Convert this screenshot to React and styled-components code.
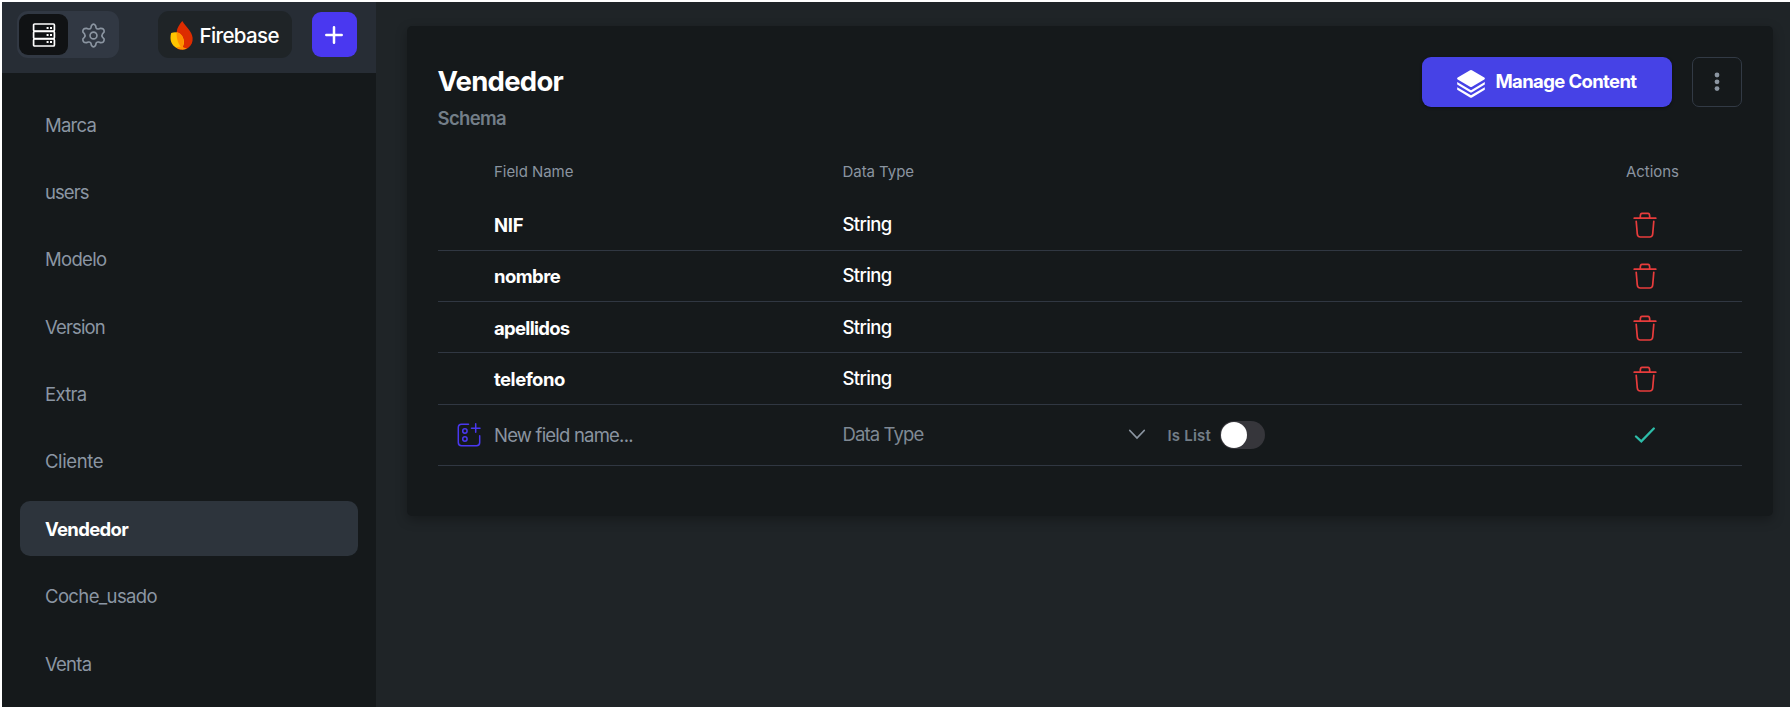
import React from "react";
import styled, { createGlobalStyle, css } from "styled-components";

const GlobalStyle = createGlobalStyle`
  *, *::before, *::after { box-sizing: border-box; }
  body {
    margin: 0;
    background: #fff;
    font-family: Inter, "Liberation Sans", sans-serif;
    font-feature-settings: "liga" 0;
  }
  svg { display: block; flex: none; }
  button { font: inherit; border: 0; padding: 0; background: none; cursor: pointer; }
`;

const Frame = styled.div`
  height: 709px;
  padding: 2px;
  display: flex;
  overflow: hidden;
`;

const Sidebar = styled.aside`
  width: 374px;
  flex: none;
  background: #15191b;
  overflow: hidden;
`;

const SidebarHeader = styled.header`
  height: 71px;
  padding: 9px 19.5px 0 14.5px;
  display: flex;
  align-items: flex-start;
  background: #272d35;
`;

const ViewSwitch = styled.div`
  width: 102.5px;
  height: 47px;
  padding: 3px 2.4px;
  display: flex;
  border-radius: 11px;
  background: #313843;
`;

const ViewTab = styled.button`
  width: ${({ $active }) => ($active ? 50 : 46)}px;
  margin-left: ${({ $active }) => ($active ? 0 : 3)}px;
  padding-top: 1px;
  height: 41px;
  display: flex;
  align-items: center;
  justify-content: center;
  border-radius: 9px;
  color: ${({ $active }) => ($active ? "#fff" : "#8b95a1")};
  background: ${({ $active }) => ($active ? "#101214" : "transparent")};
`;

const Provider = styled.button`
  width: 134px;
  height: 47px;
  margin-left: 38.5px;
  padding: 1px 0 0 12px;
  display: flex;
  align-items: center;
  gap: 6px;
  border-radius: 11px;
  background: #1f2427;
  color: #fff;
  font-size: 20.5px;
  font-weight: 500;
  letter-spacing: -0.62px;
`;

const AddButton = styled.button`
  width: 45px;
  height: 45px;
  margin: 1px 0 0 auto;
  display: flex;
  align-items: center;
  justify-content: center;
  border-radius: 9px;
  background: #4a38f0;
`;

const ModelList = styled.nav`
  padding: 24px 18px 0;
  display: flex;
  flex-direction: column;
  gap: 12.4px;
`;

const ModelItem = styled.a`
  height: 55px;
  flex: none;
  padding: 0 25px;
  display: flex;
  align-items: center;
  border-radius: 10px;
  font-size: 18.5px;
  letter-spacing: ${({ $tracking }) => $tracking}px;
  color: #8b96a3;
  ${({ $active }) =>
    $active &&
    css`
      background: #2d343c;
      color: #fff;
      font-weight: 700;
    `}
`;

const Main = styled.main`
  flex: 1;
  min-width: 0;
  padding: 24px 17px 0 30.5px;
  background: #1f2427;
`;

const Card = styled.section`
  height: 489.5px;
  padding: 31px 31px 0;
  border-radius: 5px;
  background: #15191b;
  box-shadow: 0 4px 12px rgba(0, 0, 0, 0.28);
`;

const CardHeader = styled.header`
  height: 97.5px;
  display: flex;
  align-items: flex-start;
`;

const Heading = styled.div`
  flex: 1;
  padding-top: 6px;
`;

const Title = styled.h1`
  margin: 0;
  font-size: 27.5px;
  line-height: 36px;
  font-weight: 700;
  letter-spacing: -0.75px;
  color: #fff;
`;

const Subtitle = styled.h2`
  margin: 7px 0 0;
  font-size: 18.5px;
  line-height: 24px;
  font-weight: 600;
  letter-spacing: -0.65px;
  color: #737e88;
`;

const ManageButton = styled.button`
  width: 250px;
  height: 50px;
  padding-left: 34.5px;
  display: flex;
  align-items: center;
  gap: 11px;
  border-radius: 9px;
  background: #4642e6;
  box-shadow: 0 1px 3px rgba(0, 0, 0, 0.4);
  color: #fff;
  font-size: 18.5px;
  font-weight: 700;
  letter-spacing: -0.63px;

  svg { margin-top: 4px; }
  span { margin-top: -2px; }
`;

const MenuButton = styled.button`
  width: 50px;
  height: 50px;
  margin-left: 20px;
  display: flex;
  align-items: center;
  justify-content: center;
  border: 1px solid #323a45;
  border-radius: 7px;
`;

const GridRow = styled.div`
  display: grid;
  grid-template-columns: 56.5px 348.5px 1fr 117px;
  align-items: center;
`;

const HeadRow = styled(GridRow)`
  height: 45px;
  padding-bottom: 11px;
  font-size: 15px;
  letter-spacing: -0.05px;
  color: #8a94a0;
`;

const ActionsLabel = styled.span`
  padding-left: 1px;
`;

const FieldRow = styled(GridRow)`
  height: ${({ $tall }) => ($tall ? 61.3 : 51.25)}px;
  border-bottom: 1px solid #303742;
`;

const FieldName = styled.span`
  font-size: 18.5px;
  font-weight: 700;
  letter-spacing: ${({ $tracking }) => $tracking}px;
  color: #fff;
  padding-top: 1px;
`;

const FieldType = styled.span`
  font-size: 18.5px;
  font-weight: 500;
  letter-spacing: -0.65px;
  color: #fff;
  margin-top: -1px;
`;

const NameInput = styled.span`
  font-size: 18.5px;
  letter-spacing: -0.79px;
  color: #8a94a0;
  padding-top: 1px;
`;

const IconCell = styled.div`
  display: flex;
  padding-top: 1px;
  padding-left: ${({ $inset }) => $inset}px;
`;

const TypeCell = styled.div`
  display: flex;
  align-items: center;
`;

const TypeSelect = styled.div`
  width: 303px;
  margin-top: -1px;
  display: flex;
  align-items: center;
  justify-content: space-between;
  font-size: 18.5px;
  letter-spacing: -0.87px;
  color: #7f8994;
`;

const ListLabel = styled.span`
  margin: 2px 8.5px 0 22px;
  font-size: 15px;
  font-weight: 600;
  letter-spacing: 0.2px;
  color: #737e88;
`;

const Toggle = styled.div`
  width: 45.5px;
  height: 28px;
  padding: 1px;
  border-radius: 14px;
  background: #36363b;

  &::before {
    content: "";
    display: block;
    width: 26px;
    height: 26px;
    border-radius: 50%;
    background: #fff;
  }
`;

const ServerIcon = () => (
  <svg width="24" height="24" viewBox="0 0 24 24" fill="none" stroke="currentColor" strokeWidth="1.7">
    <rect x="1.6" y="1" width="20.8" height="7" rx="1" />
    <rect x="1.6" y="8.5" width="20.8" height="7" rx="1" />
    <rect x="1.6" y="16" width="20.8" height="7" rx="1" />
    <path d="M14.6 5h2M18 5h2M14.6 12h2M18 12h2M14.6 19h2M18 19h2" strokeWidth="2" />
  </svg>
);

const GearIcon = () => (
  <svg width="25" height="25" viewBox="0 0 24 24" fill="none" stroke="currentColor" strokeWidth="1.6" strokeLinejoin="round">
    <circle cx="12" cy="12" r="3.3" />
    <path d="M10 2.7Q12 -.5 14 2.7L14.5 4.6Q15.2 6.1 16.8 5.7L18.7 5.2Q22.5 5 22.2 8.6L20.7 10.3Q19.5 12 20.7 13.7L22.2 15.4Q22.5 19 18.7 18.8L16.8 18.3Q15.2 17.900 14.5 19.4L14 21.3Q12 24.5 10 21.3L9.5 19.4Q8.8 17.9 7.2 18.3L5.3 18.8Q1.5 19 1.8 15.4L3.3 13.7Q4.5 12 3.3 10.3L1.8 8.6Q1.5 5 5.3 5.2L7.2 5.7Q8.8 6.1 9.5 4.6Z" />
  </svg>
);

const FlameIcon = () => (
  <svg width="24" height="29" viewBox="0 0 24 29">
    <path d="M12.3 0C9.5 3.5 7 6.5 6.6 11.5L7.8 28C10 28.9 15 29 18.3 26.7C21.5 24.5 23 21 22.6 16.8C22 10.5 16 6 12.3 0Z" fill="#dd2c00" />
    <path d="M1.2 12C5 10.3 10 11 12.4 15.5C14.8 20 14.5 24.5 11 28.3C4.5 27.5 .5 22.5 .5 17C.5 15 .7 13.4 1.2 12Z" fill="#ffc400" />
    <path d="M6.6 11.3C9.500 11.7 11.5 13.5 12.7 16C14.2 19.5 14 23.5 12 27C8.5 24 6.3 18 6.6 11.3Z" fill="#ff9100" />
    <path d="M5.5 26.3Q8.500 28.6 12.5 28.7Q15.5 28.6 17 27.6Q14 27 12 25.5Z" fill="#ff9100" />
  </svg>
);

const PlusIcon = () => (
  <svg width="18" height="18" viewBox="0 0 18 18" stroke="#fff" strokeWidth="2.5" strokeLinecap="round">
    <path d="M9 1.3v15.4M1.3 9h15.4" />
  </svg>
);

const LayersIcon = () => (
  <svg width="28" height="28" viewBox="0 0 28 28" fill="#fff">
    <path d="M13.1 .3Q14 -.2 14.9 .3L27.3 7.5Q28.5 8.5 27.3 9.4L15 16.7Q14 17.3 13 16.7L.7 9.4Q-.5 8.5 .7 7.5Z" />
    <path d="M.2 12L14 20.2L27.8 12V14.5L15 22.2Q14 22.8 13 22.2L.2 14.5Z" />
    <path d="M.2 17.2L14 25.3L27.8 17.2V19.7L15 27.4Q14 28 13 27.4L.2 19.7Z" />
  </svg>
);

const DotsIcon = () => (
  <svg width="6" height="20" viewBox="0 0 6 20" fill="#8b95a1">
    <circle cx="3" cy="3" r="2.4" />
    <circle cx="3" cy="9.8" r="2.4" />
    <circle cx="3" cy="16.6" r="2.4" />
  </svg>
);

const TrashIcon = () => (
  <svg width="24" height="26" viewBox="0 0 24 26" fill="none" stroke="#e83c3c" strokeWidth="1.7" strokeLinecap="round" strokeLinejoin="round">
    <path d="M1.2 6.200H22.8M7.3 6V4.5Q7.3 1.4 9 1.4H15Q16.7 1.4 16.7 4.5V6" />
    <path d="M3.2 9.3L4.3 22Q4.6 25 7.3 25H16.7Q19.4 25 19.7 22L20.8 9.3" />
  </svg>
);

const NewFieldIcon = () => (
  <svg width="24" height="24" viewBox="0 0 24 24" fill="none" stroke="#4a38f0" strokeWidth="1.5" strokeLinecap="round">
    <path d="M11.5 1.3H4.5Q1.3 1.3 1.3 4.5V19.5Q1.3 22.7 4.5 22.7H19.5Q22.7 22.7 22.7 19.5V12.7" />
    <path d="M18.7 .8V9.3M14.5 5.2H23" />
    <circle cx="7.9" cy="8" r="2.2" />
    <circle cx="7.9" cy="16" r="2.2" />
  </svg>
);

const ChevronIcon = () => (
  <svg width="18" height="11" viewBox="0 0 18 11" fill="none" stroke="#8b95a1" strokeWidth="1.8" strokeLinecap="round">
    <path d="M1.8 1.5L9 9L16.2 1.5" />
  </svg>
);

const CheckIcon = () => (
  <svg width="22" height="17" viewBox="0 0 22 17" fill="none" stroke="#2dbda9" strokeWidth="2.3" strokeLinecap="round">
    <path d="M2 9.5L7.3 14.3L19.8 1.5" />
  </svg>
);

const models = [
  { name: "Marca", tracking: -0.75 },
  { name: "users", tracking: -0.95 },
  { name: "Modelo", tracking: -0.67 },
  { name: "Version", tracking: -0.85 },
  { name: "Extra", tracking: -0.7 },
  { name: "Cliente", tracking: -0.4 },
  { name: "Vendedor", tracking: -0.68, active: true },
  { name: "Coche_usado", tracking: -0.62 },
  { name: "Venta", tracking: -0.75 },
];

const fields = [
  { name: "NIF", type: "String", tracking: -0.3 },
  { name: "nombre", type: "String", tracking: -0.55 },
  { name: "apellidos", type: "String", tracking: -0.7 },
  { name: "telefono", type: "String", tracking: -0.5 },
];

export default function App() {
  return (
    <Frame>
      <GlobalStyle />
      <Sidebar>
        <SidebarHeader>
          <ViewSwitch>
            <ViewTab $active><ServerIcon /></ViewTab>
            <ViewTab><GearIcon /></ViewTab>
          </ViewSwitch>
          <Provider><FlameIcon />Firebase</Provider>
          <AddButton><PlusIcon /></AddButton>
        </SidebarHeader>
        <ModelList>
          {models.map(({ name, tracking, active }) => (
            <ModelItem key={name} $tracking={tracking} $active={active}>{name}</ModelItem>
          ))}
        </ModelList>
      </Sidebar>
      <Main>
        <Card>
          <CardHeader>
            <Heading>
              <Title>Vendedor</Title>
              <Subtitle>Schema</Subtitle>
            </Heading>
            <ManageButton><LayersIcon /><span>Manage Content</span></ManageButton>
            <MenuButton><DotsIcon /></MenuButton>
          </CardHeader>
          <HeadRow>
            <span />
            <span>Field Name</span>
            <span>Data Type</span>
            <ActionsLabel>Actions</ActionsLabel>
          </HeadRow>
          {fields.map(({ name, type, tracking }) => (
            <FieldRow key={name}>
              <span />
              <FieldName $tracking={tracking}>{name}</FieldName>
              <FieldType>{type}</FieldType>
              <IconCell $inset={7.5}><TrashIcon /></IconCell>
            </FieldRow>
          ))}
          <FieldRow $tall>
            <IconCell $inset={19}><NewFieldIcon /></IconCell>
            <NameInput>New field name...</NameInput>
            <TypeCell>
              <TypeSelect>Data Type<ChevronIcon /></TypeSelect>
              <ListLabel>Is List</ListLabel>
              <Toggle />
            </TypeCell>
            <IconCell $inset={9}><CheckIcon /></IconCell>
          </FieldRow>
        </Card>
      </Main>
    </Frame>
  );
}
